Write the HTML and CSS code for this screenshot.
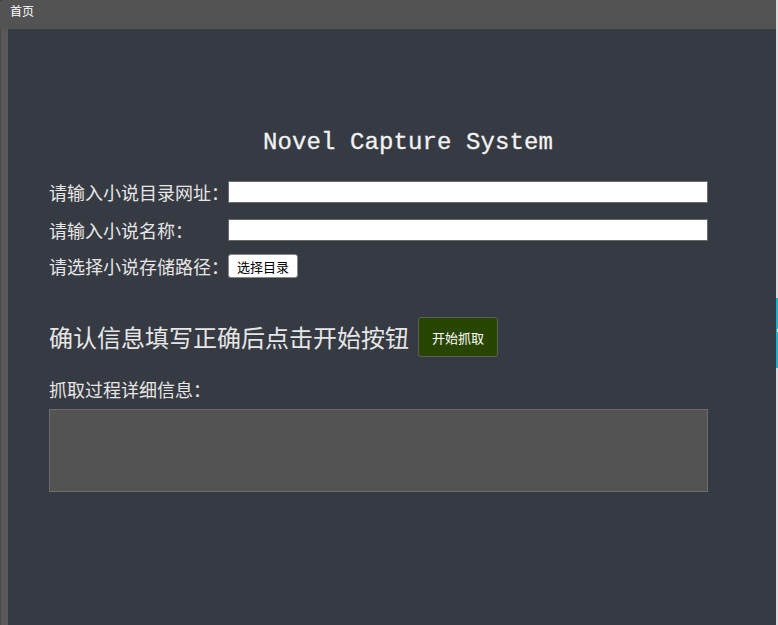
FILE: index.html
```html
<!DOCTYPE html>
<html lang="zh-CN">
<head>
<meta charset="utf-8">
<title>首页</title>
<link rel="stylesheet" href="styles.css">
</head>
<body>
<div class="window">
  <div class="main-area">
    <div class="tabbar"><span class="tab-title">首页</span></div>
    <div class="body-row">
      <div class="left-strip"></div>
      <div class="panel">
        <h1 class="title">Novel Capture System</h1>
        <div class="form">
          <div class="row">
            <label class="label">请输入小说目录网址：</label>
            <input class="field" type="text">
          </div>
          <div class="row row-tight">
            <label class="label">请输入小说名称：</label>
            <input class="field" type="text">
          </div>
          <div class="row">
            <label class="label">请选择小说存储路径：</label>
            <button class="choose-btn">选择目录</button>
          </div>
          <div class="start-row">
            <span class="start-text">确认信息填写正确后点击开始按钮</span>
            <button class="start-btn">开始抓取</button>
          </div>
          <div class="log-label">抓取过程详细信息：</div>
          <div class="log-box"></div>
        </div>
      </div>
    </div>
  </div>
  <div class="right-edge">
    <div class="cyan-mark"><span class="notch"></span></div>
  </div>
</div>
</body>
</html>
```

FILE: styles.css
```css
html, body {
  margin: 0;
  padding: 0;
  background: #363a42;
}
body {
  width: 778px;
  height: 625px;
  overflow: hidden;
  font-family: "Noto Sans CJK SC", "Liberation Sans", sans-serif;
}
.window {
  display: flex;
  width: 778px;
  height: 625px;
}
.main-area {
  display: flex;
  flex-direction: column;
  width: 776px;
  height: 625px;
}
.tabbar {
  height: 29px;
  background: #535353;
  display: flex;
  align-items: flex-start;
  border-top-left-radius: 3px;
}
.tab-title {
  color: #ffffff;
  font-size: 12px;
  line-height: 14px;
  margin-left: 10px;
  margin-top: 4px;
}
.body-row {
  flex: 1;
  display: flex;
}
.left-strip {
  width: 7px;
  background: #585858;
  border-left: 1px solid #4a4a4a;
}
.panel {
  flex: 1;
  background: #363a42;
  padding-top: 98px;
}
.title {
  margin: 0 0 0 255px;
  font-family: "Liberation Mono", monospace;
  font-weight: normal;
  font-size: 24px;
  line-height: 32px;
  color: #f2f2f2;
  letter-spacing: 0.1px;
  -webkit-text-stroke: 0.3px #f2f2f2;
}
.form {
  margin-left: 41px;
  width: 659px;
  margin-top: 21px;
  display: flex;
  flex-direction: column;
}
.row {
  display: flex;
  align-items: center;
  height: 24px;
  margin-bottom: 14px;
}
.row-tight {
  margin-bottom: 12px;
}
.label {
  width: 179px;
  font-size: 18px;
  color: #e6e6e6;
  line-height: 24px;
  white-space: nowrap;
}
.field {
  width: 480px;
  height: 22px;
  box-sizing: border-box;
  margin: 0;
  border: 1px solid #6a6a6a;
  background: #ffffff;
  padding: 0 3px;
  outline: none;
}
.choose-btn {
  width: 70px;
  height: 24px;
  margin: 0;
  padding: 0;
  background: #ffffff;
  border: 1px solid #8a8a8a;
  border-radius: 3px;
  font-family: "Noto Sans CJK SC", sans-serif;
  font-size: 13px;
  color: #000000;
}
.start-row {
  display: flex;
  align-items: center;
  height: 40px;
  margin-top: 25px;
}
.start-text {
  font-size: 24px;
  color: #e6e6e6;
  line-height: 40px;
  white-space: nowrap;
}
.start-btn {
  width: 80px;
  height: 40px;
  margin: 0 0 0 9px;
  padding: 0;
  background: #284502;
  border: 1px solid #5a5e5a;
  border-radius: 3px;
  font-family: "Noto Sans CJK SC", sans-serif;
  font-size: 13px;
  color: #ffffff;
}
.log-label {
  margin-top: 20px;
  font-size: 18px;
  line-height: 24px;
  color: #e6e6e6;
}
.log-box {
  margin-top: 8px;
  width: 659px;
  height: 83px;
  box-sizing: border-box;
  background: #535353;
  border: 1px solid #6c6c6c;
}
.right-edge {
  width: 2px;
  height: 625px;
  background: #dcdcdc;
}
.cyan-mark {
  margin-top: 298px;
  height: 70px;
  background: #22b4c6;
  display: flex;
  flex-direction: column;
  align-items: flex-end;
}
.notch {
  display: block;
  width: 1px;
  height: 3px;
  margin-top: 31px;
  background: #dff4f7;
}
```
